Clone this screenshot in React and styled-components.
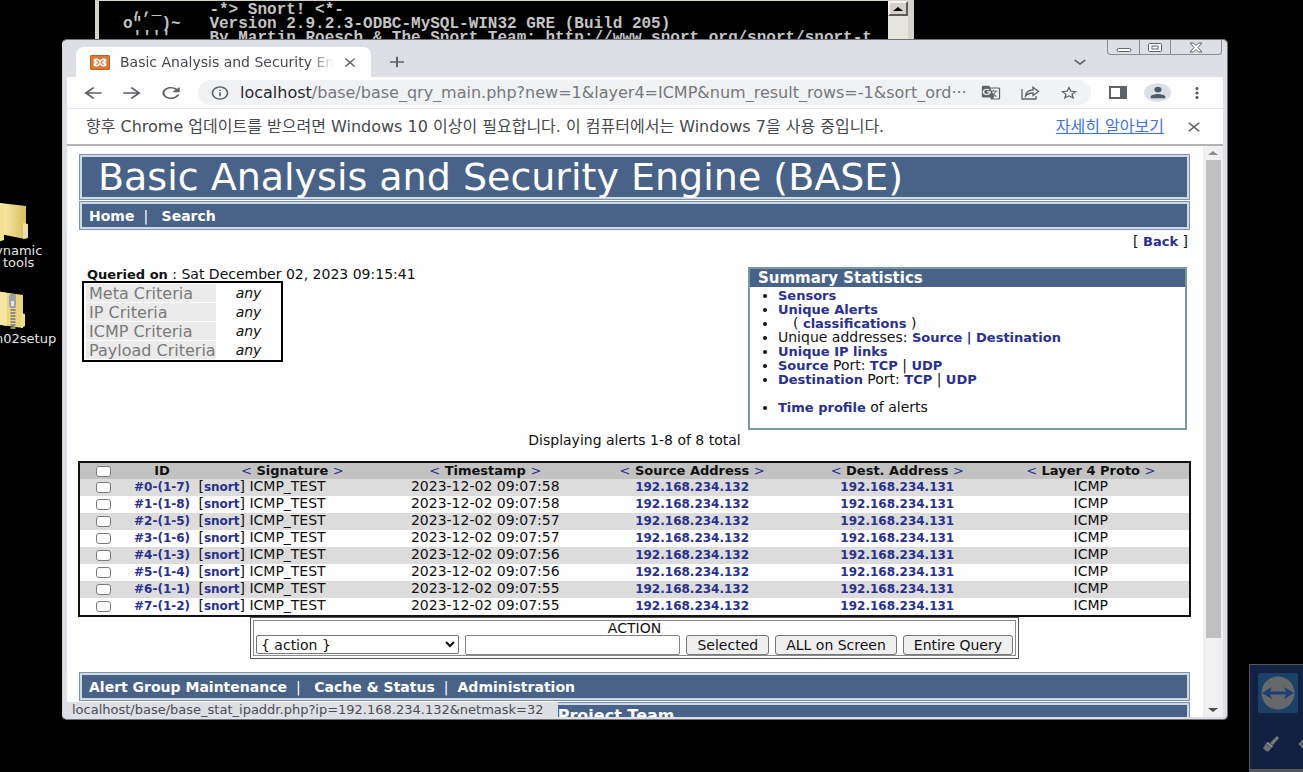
import React from 'react';
import styled, {createGlobalStyle, css} from 'styled-components';
import {
    MdAdd,
    MdArrowBack,
    MdArrowForward,
    MdClose,
    MdExpandMore,
    MdGTranslate,
    MdInfoOutline,
    MdMoreVert,
    MdPerson,
    MdRefresh,
    MdStarBorder
} from 'react-icons/md'

const colors = {
    bar: '#486387',
    barEdge: '#7d93b5',
    barInner: '#ced9e4',
    link: '#293090',
    frame: '#dedfe5',
    icon: '#5f6266'
}

const GlobalStyle = createGlobalStyle`
    * {
        box-sizing: border-box;
    }

    body {
        margin: 0;
        background: #000;
        font-family: "DejaVu Sans", "Noto Sans CJK KR", sans-serif;
        font-size: 14px;
        color: #111;
    }

    button, input, select {
        font: inherit;
        color: inherit;
        margin: 0;
    }
`

/* ---------- desktop ---------- */

const Desktop = styled.div`
    position: relative;
    height: 100vh;
    overflow: hidden;
    background: #000;
`

const DesktopIcon = styled.div`
    position: absolute;
    left: ${props => props.$left}px;
    top: ${props => props.$top}px;
    color: #e4e4e4;
    font-size: 13px;
    line-height: 12px;
    text-align: center;

    svg {
        display: block;
        margin-bottom: 1px;
    }
`

const Console = styled.section`
    position: absolute;
    left: 95px;
    top: 0;
    width: 819px;
    height: 60px;
    display: flex;
    border: solid #d6d3cb;
    border-width: 1px 6px 0 4px;
    background: #000;
`

const ConsoleText = styled.pre`
    flex: 1;
    margin: 0;
    padding: 2px 0 0 24px;
    overflow: hidden;
    color: #c4c4c4;
    font: bold 16px/14px "Liberation Mono", monospace;
`

const ConsoleScroll = styled.div`
    width: 20px;
    background: #e6e4df;
`

const ScrollButton = styled.button`
    display: flex;
    align-items: center;
    justify-content: center;
    width: 20px;
    height: 15px;
    padding: 0;
    border: 2px solid;
    border-color: #f4f2ee #5c5a56 #5c5a56 #f4f2ee;
    background: #d4d0c8;
`

const Widget = styled.aside`
    position: absolute;
    right: 0;
    bottom: 0;
    width: 54px;
    height: 108px;
    padding: 8px;
    overflow: hidden;
    border: solid #55575a;
    border-width: 1px 0 3px 1px;
    background: #122142;

    svg {
        display: block;
    }
`

const WidgetTools = styled.div`
    display: flex;
    gap: 18px;
    width: 70px;
    margin: 22px 0 0 4px;
`

/* ---------- browser ---------- */

const Browser = styled.main`
    position: absolute;
    left: 62px;
    right: 75px;
    top: 39px;
    bottom: 52px;
    display: flex;
    flex-direction: column;
    padding: 0 4px 2px;
    overflow: hidden;
    border: 1px solid #6f7177;
    border-left-color: #d0d1d8;
    border-radius: 5px;
    background: ${colors.frame};
`

const TabStrip = styled.header`
    display: flex;
    align-items: flex-end;
    height: 37px;
    padding-left: 9px;
`

const Tab = styled.div`
    display: flex;
    align-items: center;
    width: 295px;
    height: 30px;
    padding: 0 11px 0 14px;
    border-radius: 8px 8px 0 0;
    background: #fefefe;
    color: #46484d;
`

const TabTitle = styled.span`
    flex: 1;
    margin: 0 6px 0 10px;
    overflow: hidden;
    white-space: nowrap;
    mask-image: linear-gradient(to right, #000 88%, transparent);
`

const Glyph = styled.span`
    display: flex;
    flex: none;

    svg {
        width: ${props => props.$width}px;
        height: ${props => props.$height}px;
    }
`

const IconButton = styled.button`
    display: flex;
    flex: none;
    align-items: center;
    justify-content: center;
    width: 20px;
    height: 20px;
    padding: 0;
    border: 0;
    background: none;
    color: ${colors.icon};
`

const StripTools = styled.div`
    display: flex;
    flex: 1;
    align-items: center;
    align-self: stretch;
    justify-content: space-between;
    padding: 7px 18px 0 16px;
`

const StripRight = styled.div`
    display: flex;
    gap: 17px;
    align-self: flex-start;
`

const MenuSlot = styled.div`
    padding-top: 5px;
`

const WindowButtons = styled.div`
    display: flex;
    height: 15px;
    margin: -7px -17px 0 0;
    border: 1px solid #8a8c92;
    border-top: 0;
    border-radius: 0 0 4px 4px;
`

const WindowButton = styled.button`
    display: flex;
    align-items: center;
    justify-content: center;
    width: ${props => (props.$wide ? 51 : 31)}px;
    padding: 0;
    border: 0;
    border-left: ${props => (props.$first ? 0 : 1)}px solid #8a8c92;
    background: none;
`

const Toolbar = styled.nav`
    display: flex;
    align-items: center;
    height: 32px;
    padding: 0 16px;
    border-bottom: 1px solid #e6e7ea;
    background: #fefefe;
`

const NavButtons = styled.div`
    display: flex;
    gap: 19px;
    margin-right: 17px;
`

const AddressBar = styled.div`
    display: flex;
    flex: 1;
    align-items: center;
    gap: 10px;
    min-width: 0;
    height: 25px;
    padding: 0 12px;
    border-radius: 13px;
    background: #f1f2f4;
    color: ${colors.icon};
`

const Address = styled.div`
    flex: 1;
    overflow: hidden;
    color: #76787c;
    font-size: 16px;
    white-space: nowrap;

    b {
        color: #27292c;
        font-weight: normal;
    }
`

const AddressTools = styled.div`
    display: flex;
    gap: 19px;
`

const BrowserTools = styled.div`
    display: flex;
    align-items: center;
    gap: 16px;
    margin-left: 17px;
`

const Avatar = styled.button`
    display: flex;
    align-items: center;
    justify-content: center;
    width: 27px;
    height: 19px;
    padding: 0;
    border: 0;
    border-radius: 50%;
    background: #dcdfe5;
    color: #505a6d;
`

const InfoBar = styled.div`
    display: flex;
    align-items: center;
    height: 37px;
    padding: 0 19px;
    border-bottom: 2px solid #b4b4b6;
    background: #fff;
    color: #46484d;
    font-size: 16px;
    line-height: 20px;

    p {
        flex: 1;
        margin: 0;
    }

    a {
        margin-right: 20px;
        color: #3f74dc;
    }
`

const Viewport = styled.div`
    position: relative;
    display: flex;
    flex: 1;
    min-height: 0;
    background: #fefefe;
`

const Scrollbar = styled.div`
    display: flex;
    flex-direction: column;
    align-items: center;
    width: 20px;
    padding: 5px 0;
    background: #f0f0f1;

    svg {
        flex: none;
    }
`

const Track = styled.div`
    flex: 1;
    width: 15px;
    margin: 5px 0;

    &::before {
        content: '';
        display: block;
        height: 88%;
        background: #c0c0c1;
    }
`

const StatusBubble = styled.div`
    position: absolute;
    left: 0;
    bottom: 0;
    padding: 0 14px 0 5px;
    background: ${colors.frame};
    color: #4c4e53;
    font-size: 13px;
    line-height: 15px;
`

/* ---------- page ---------- */

const Page = styled.div`
    flex: 1;
    min-width: 0;
    padding: 8px 13px 0 12px;
    overflow: hidden;
`

const framed = css`
    border: 1px solid ${colors.barEdge};
    background: ${colors.bar};
    box-shadow: inset 0 0 0 2px ${colors.barInner};
    color: #fff;
`

const Banner = styled.h1`
    ${framed}
    height: 46px;
    margin: 0 0 1px;
    padding: 0 18px;
    font-size: 38px;
    font-weight: normal;
    line-height: 44px;
    white-space: nowrap;
`

const Link = styled.a`
    color: ${colors.link};
    font-size: 13px;
    font-weight: bold;
    text-decoration: none;
`

const Menu = styled.nav`
    ${framed}
    display: flex;
    gap: 9px;
    align-items: center;
    height: 29px;
    margin-bottom: 1px;
    padding: 0 9px;

    ${Link} {
        color: #fff;
        font-size: 14px;
    }
`

const Credits = styled(Menu)`
    align-items: flex-start;
    padding: 3px 0 0 43%;

    ${Link} {
        font-size: 16px;
    }
`

const BackRow = styled.div`
    height: 18px;
    padding: 2px 2px 0 0;
    line-height: 16px;
    text-align: right;
`

const Overview = styled.section`
    display: flex;
    align-items: flex-start;
    justify-content: space-between;
    padding: 18px 3px 0;
`

const Queried = styled.p`
    height: 14px;
    margin: 0;
    padding-left: 5px;
    line-height: 14px;

    b {
        font-size: 13px;
    }
`

const Criteria = styled.table`
    width: 201px;
    border: 2px solid #000;
    border-collapse: separate;
    border-spacing: 2px 1px;

    th, td {
        height: 18px;
        padding: 0;
        line-height: 17px;
    }

    th {
        width: 130px;
        padding-left: 3px;
        background: #ebebeb;
        color: #7a7a7a;
        font-size: 16px;
        font-weight: normal;
        text-align: left;
        white-space: nowrap;
    }

    td {
        font-style: italic;
        text-align: center;
    }
`

const Summary = styled.aside`
    width: 439px;
    height: 163px;
    border: 2px solid #789a9a;

    h2 {
        margin: 0;
        padding: 0 8px;
        background: ${colors.bar};
        color: #fff;
        font-size: 15px;
        line-height: 18px;
    }

    ul {
        margin: 0;
        padding: 1px 0 0 28px;
        line-height: 14px;
    }

    li {
        height: 14px;
    }

    li:last-child {
        margin-top: 14px;
    }
`

const Indent = styled.span`
    padding-left: 15px;
`

const Caption = styled.p`
    margin: 2px 0 13px;
    line-height: 16px;
    text-align: center;
`

const Alerts = styled.table`
    width: calc(100% + 2px);
    margin-left: -1px;
    table-layout: fixed;
    border: 2px solid #111;
    border-spacing: 0;

    th, td {
        height: 17px;
        padding: 0 2px;
        line-height: 15px;
        text-align: center;
        vertical-align: top;
        white-space: nowrap;
    }

    th {
        height: 16px;
        background: #c2c2c2;
        font-size: 13px;
        line-height: 16px;
    }

    tbody tr:nth-child(odd) {
        background: #dcdcdc;
    }

    td:nth-child(3) {
        text-align: left;
    }

    td ${Link} {
        font-size: 12px;
    }
`

const Col = styled.col`
    width: ${props => props.$width}%;
`

const Check = styled.input`
    display: block;
    width: 15px;
    height: 11px;
    margin: 3px auto 2px;
    appearance: none;
    border: 1px solid #7b7b7b;
    border-radius: 3px;
    background: #fff;
`

const Sort = styled(Link)`
    font-weight: normal;
`

const ActionBox = styled.form`
    width: 769px;
    max-width: 100%;
    margin: 0 auto 13px;
    padding: 2px;
    border: 1px solid #555;
    text-align: center;
`

const ActionInner = styled.div`
    padding: 0 2px;
    border: 1px solid #8b8b8b;
    line-height: 14px;
`

const ActionControls = styled.div`
    display: flex;
    gap: 6px;
`

const Select = styled.select`
    width: 203px;
    height: 19px;
    padding: 0;
    border: 1px solid #777;
    border-radius: 2px;
    background: #fff;
`

const TextInput = styled.input`
    flex: 1;
    min-width: 0;
    height: 20px;
    border: 1px solid #858585;
    border-radius: 2px;
`

const Button = styled.button`
    height: 20px;
    padding: 0 10px;
    border: 1px solid #777;
    border-radius: 3px;
    background: #efefef;
    line-height: 16px;
`

const Icon = ({shape: Shape, width = 26, height = 18}) => (
    <Glyph $width={width} $height={height}>
        <Shape preserveAspectRatio="none"/>
    </Glyph>
)

const Arrow = ({down, color = '#000'}) => (
    <svg width="10" height="4" viewBox="0 0 10 4">
        <path d={down ? 'M0 0h10L5 4z' : 'M0 4h10L5 0z'} fill={color}/>
    </svg>
)

const Favicon = () => (
    <svg width="20" height="15" viewBox="0 0 20 15">
        <rect width="20" height="15" rx="1.5" fill="#d97a35"/>
        <rect x=".5" y=".5" width="19" height="14" rx="1" fill="none" stroke="#b96124"/>
        <path
            d="M5.5 3.5h1.500q2 0 3 2 1-2 3-2h1.500q2 0 2 2 0 1.500-1.500 2 1.500.5 1.500 2 0 2-2 2H13q-2 0-3-2-1 2-3 2H5.500q-2 0-2-2 0-1.500 1.500-2-1.500-.5-1.500-2 0-2 2-2z"
            fill="#fff"
        />
        <path d="M6 5.800h1.500L9 7.500 7.500 9.200H6M14 5.800h-1.500L11 7.500l1.500 1.700H14" fill="none" stroke="#d97a35" strokeWidth="1.100"/>
    </svg>
)

const ShareIcon = () => (
    <svg width="19" height="14" viewBox="0 0 19 14" fill="none" stroke="currentColor" strokeWidth="1.300">
        <path d="M1 3v10h14v-3"/>
        <path d="M4.500 10c.5-4 3.500-6 7.500-6V1.200L17.500 5.500 12 9.500V7C8.500 7 6 8 4.500 10z"/>
    </svg>
)

const PanelIcon = () => (
    <svg width="18" height="13" viewBox="0 0 18 13">
        <rect x="1" y="1" width="16" height="11" fill="#fff" stroke="currentColor" strokeWidth="2"/>
        <path d="M11 1h6v11h-6z" fill="currentColor"/>
    </svg>
)

const FolderShape = ({zip}) => (
    <svg width="34" height="42" viewBox="0 0 34 42">
        <defs>
            <linearGradient id="paper" x1="0" x2="1">
                <stop offset="0" stopColor="#fbeeb0"/>
                <stop offset="1" stopColor="#d6bb5c"/>
            </linearGradient>
        </defs>
        {zip ? (
            <>
                <path d="M0 1l28 4v33L0 34z" fill="#ecd57f"/>
                <path d="M0 1l12 2v33L0 34z" fill="#f4e5a0"/>
                <path d="M18 4v35" stroke="#8b8c86" strokeWidth="5" strokeDasharray="2 1"/>
                <rect x="14" y="4" width="7" height="14" rx="3" fill="#9ba4ac"/>
                <rect x="16" y="11" width="3" height="5" fill="#dfe5e9"/>
                <path d="M26 23l4 1v12l-4 2z" fill="#efdc8d"/>
            </>
        ) : (
            <>
                <path d="M5 1l26 3v23l2 1v8l-3 1-25-5z" fill="url(#paper)"/>
                <path d="M0 2l9 2v34L0 41z" fill="#f2df91"/>
                <path d="M28 21l5 1v13l-5 2z" fill="#f1e09a"/>
                <path d="M29 30h3v4h-3z" fill="#c3e0ef"/>
            </>
        )}
    </svg>
)

const snort = ` ,,_     -*> Snort! <*-
o"  )~   Version 2.9.2.3-ODBC-MySQL-WIN32 GRE (Build 205)
 ''''    By Martin Roesch & The Snort Team: http://www.snort.org/snort/snort-t`

const criteria = ['Meta', 'IP', 'ICMP', 'Payload']
const headings = ['Signature', 'Timestamp', 'Source Address', 'Dest. Address', 'Layer 4 Proto']
const widths = [4.3, 6.2, 17.3, 17.5, 19.8, 17.2, 17.7]

const alerts = [
    ['#0-(1-7)', '58'],
    ['#1-(1-8)', '58'],
    ['#2-(1-5)', '57'],
    ['#3-(1-6)', '57'],
    ['#4-(1-3)', '56'],
    ['#5-(1-4)', '56'],
    ['#6-(1-1)', '55'],
    ['#7-(1-2)', '55']
]

const BrowserHeader = () => (
    <>
        <TabStrip>
            <Tab>
                <Favicon/>
                <TabTitle>Basic Analysis and Security En</TabTitle>
                <IconButton aria-label="Close tab"><Icon shape={MdClose} width={18} height={15}/></IconButton>
            </Tab>
            <StripTools>
                <IconButton aria-label="New tab"><Icon shape={MdAdd} width={24}/></IconButton>
                <StripRight>
                    <MenuSlot>
                        <IconButton aria-label="Search tabs"><Icon shape={MdExpandMore} width={24}/></IconButton>
                    </MenuSlot>
                    <WindowButtons>
                        <WindowButton aria-label="Minimize" $first>
                            <svg width="16" height="11" viewBox="0 0 16 11">
                                <rect x="1" y="6.500" width="14" height="3" rx="1.500" fill="#fff" stroke="#606268"/>
                            </svg>
                        </WindowButton>
                        <WindowButton aria-label="Maximize">
                            <svg width="16" height="11" viewBox="0 0 16 11" fill="#fff" stroke="#606268">
                                <rect x="1.500" y="1.500" width="13" height="8" rx="1"/>
                                <rect x="5" y="4" width="6" height="3"/>
                            </svg>
                        </WindowButton>
                        <WindowButton aria-label="Close" $wide>
                            <svg width="14" height="11" viewBox="0 0 14 11" fill="#fff" stroke="#606268">
                                <path d="M1 1h3.500L7 3.500 9.500 1H13L9 5.500 13 10H9.500L7 7.500 4.500 10H1L5 5.500z"/>
                            </svg>
                        </WindowButton>
                    </WindowButtons>
                </StripRight>
            </StripTools>
        </TabStrip>
        <Toolbar>
            <NavButtons>
                <IconButton aria-label="Back"><Icon shape={MdArrowBack}/></IconButton>
                <IconButton aria-label="Forward"><Icon shape={MdArrowForward}/></IconButton>
                <IconButton aria-label="Reload"><Icon shape={MdRefresh}/></IconButton>
            </NavButtons>
            <AddressBar>
                <Icon shape={MdInfoOutline} width={20} height={16}/>
                <Address>
                    <b>localhost</b>/base/base_qry_main.php?new=1&amp;layer4=ICMP&amp;num_result_rows=-1&amp;sort_ord···
                </Address>
                <AddressTools>
                    <IconButton aria-label="Translate"><Icon shape={MdGTranslate} width={20} height={15}/></IconButton>
                    <IconButton aria-label="Share"><ShareIcon/></IconButton>
                    <IconButton aria-label="Bookmark"><Icon shape={MdStarBorder} width={20} height={16}/></IconButton>
                </AddressTools>
            </AddressBar>
            <BrowserTools>
                <IconButton aria-label="Side panel"><PanelIcon/></IconButton>
                <Avatar aria-label="Profile"><Icon shape={MdPerson} width={22} height={17}/></Avatar>
                <IconButton aria-label="Menu"><Icon shape={MdMoreVert} width={20}/></IconButton>
            </BrowserTools>
        </Toolbar>
        <InfoBar>
            <p>향후 Chrome 업데이트를 받으려면 Windows 10 이상이 필요합니다. 이 컴퓨터에서는 Windows 7을 사용 중입니다.</p>
            <a href="#more">자세히 알아보기</a>
            <IconButton aria-label="Dismiss"><Icon shape={MdClose} width={20} height={16}/></IconButton>
        </InfoBar>
    </>
)

const SummaryBox = () => (
    <Summary>
        <h2>Summary Statistics</h2>
        <ul>
            <li><Link href="#sensors">Sensors</Link></li>
            <li><Link href="#alerts">Unique Alerts</Link></li>
            <li><Indent>( <Link href="#classes">classifications</Link> )</Indent></li>
            <li>Unique addresses: <Link href="#src">Source</Link> <Link as="span">|</Link> <Link href="#dst">Destination</Link></li>
            <li><Link href="#links">Unique IP links</Link></li>
            <li><Link href="#sport">Source</Link> Port: <Link href="#stcp">TCP</Link> | <Link href="#sudp">UDP</Link></li>
            <li><Link href="#dport">Destination</Link> Port: <Link href="#dtcp">TCP</Link> | <Link href="#dudp">UDP</Link></li>
            <li><Link href="#time">Time profile</Link> of alerts</li>
        </ul>
    </Summary>
)

const AlertTable = () => (
    <Alerts>
        <colgroup>
            {widths.map((width, i) => <Col key={i} $width={width}/>)}
        </colgroup>
        <thead>
            <tr>
                <th><Check type="checkbox" aria-label="Select all"/></th>
                <th>ID</th>
                {headings.map(name => (
                    <th key={name}>
                        <Sort href="#asc">&lt;</Sort> {name} <Sort href="#desc">&gt;</Sort>
                    </th>
                ))}
            </tr>
        </thead>
        <tbody>
            {alerts.map(([id, seconds]) => (
                <tr key={id}>
                    <td><Check type="checkbox" aria-label={id}/></td>
                    <td><Link href="#alert">{id}</Link></td>
                    <td>[<Link href="#snort">snort</Link>] ICMP_TEST</td>
                    <td>2023-12-02 09:07:{seconds}</td>
                    <td><Link href="#source">192.168.234.132</Link></td>
                    <td><Link href="#dest">192.168.234.131</Link></td>
                    <td>ICMP</td>
                </tr>
            ))}
        </tbody>
    </Alerts>
)

const App = () => (
    <Desktop>
        <GlobalStyle/>
        <DesktopIcon $left={-5} $top={202}>
            <FolderShape/>
            ynamic<br/>tools
        </DesktopIcon>
        <DesktopIcon $left={-5} $top={290}>
            <FolderShape zip/>
            n02setup
        </DesktopIcon>
        <Console>
            <ConsoleText>{snort}</ConsoleText>
            <ConsoleScroll>
                <ScrollButton aria-label="Scroll up"><Arrow/></ScrollButton>
            </ConsoleScroll>
        </Console>
        <Browser>
            <BrowserHeader/>
            <Viewport>
                <Page>
                    <Banner>Basic Analysis and Security Engine (BASE)</Banner>
                    <Menu>
                        <Link href="#home">Home</Link>|&nbsp;
                        <Link href="#search">Search</Link>
                    </Menu>
                    <BackRow>[ <Link href="#back">Back</Link> ]</BackRow>
                    <Overview>
                        <div>
                            <Queried><b>Queried on</b> : Sat December 02, 2023 09:15:41</Queried>
                            <Criteria>
                                <tbody>
                                    {criteria.map(name => (
                                        <tr key={name}>
                                            <th>{name} Criteria</th>
                                            <td>any</td>
                                        </tr>
                                    ))}
                                </tbody>
                            </Criteria>
                        </div>
                        <SummaryBox/>
                    </Overview>
                    <Caption>Displaying alerts 1-8 of 8 total</Caption>
                    <AlertTable/>
                    <ActionBox>
                        <ActionInner>
                            <div>ACTION</div>
                            <ActionControls>
                                <Select aria-label="Action"><option>{'{ action }'}</option></Select>
                                <TextInput aria-label="Action argument"/>
                                <Button type="button">Selected</Button>
                                <Button type="button">ALL on Screen</Button>
                                <Button type="button">Entire Query</Button>
                            </ActionControls>
                        </ActionInner>
                    </ActionBox>
                    <Menu>
                        <Link href="#groups">Alert Group Maintenance</Link>|&nbsp;
                        <Link href="#cache">Cache &amp; Status</Link>|
                        <Link href="#admin">Administration</Link>
                    </Menu>
                    <Credits>
                        <Link href="#team">Project Team</Link>
                    </Credits>
                </Page>
                <Scrollbar>
                    <Arrow color="#8b8b8d"/>
                    <Track/>
                    <Arrow down color="#4c4c4e"/>
                </Scrollbar>
                <StatusBubble>localhost/base/base_stat_ipaddr.php?ip=192.168.234.132&amp;netmask=32</StatusBubble>
            </Viewport>
        </Browser>
        <Widget>
            <svg width="40" height="40" viewBox="0 0 40 40">
                <rect width="40" height="40" rx="2" fill="#1c4168"/>
                <circle cx="20" cy="20" r="16.500" fill="#666869"/>
                <path d="M4 20l10-6-2 4.500h16L26 14l10 6-10 6 2-4.500H12l2 4.500z" fill="#1d3d75"/>
            </svg>
            <WidgetTools>
                <svg width="18" height="18" viewBox="0 0 18 18">
                    <path d="M15 1l2 2-6 7-3-2z" fill="#77797a"/>
                    <path d="M6 7l5 4-1 2-6-5z" fill="#8d8f90"/>
                    <path d="M4 8.500l5.500 4.500L6 17l-1.500-1L3.500 16l-1-1.500L1 13z" fill="#6b6d6e"/>
                </svg>
                <svg width="16" height="18" viewBox="0 0 16 18">
                    <path d="M8 3L2 9l6 6 6-6z" fill="none" stroke="#77797a" strokeWidth="2"/>
                </svg>
            </WidgetTools>
        </Widget>
    </Desktop>
);

export default App;
